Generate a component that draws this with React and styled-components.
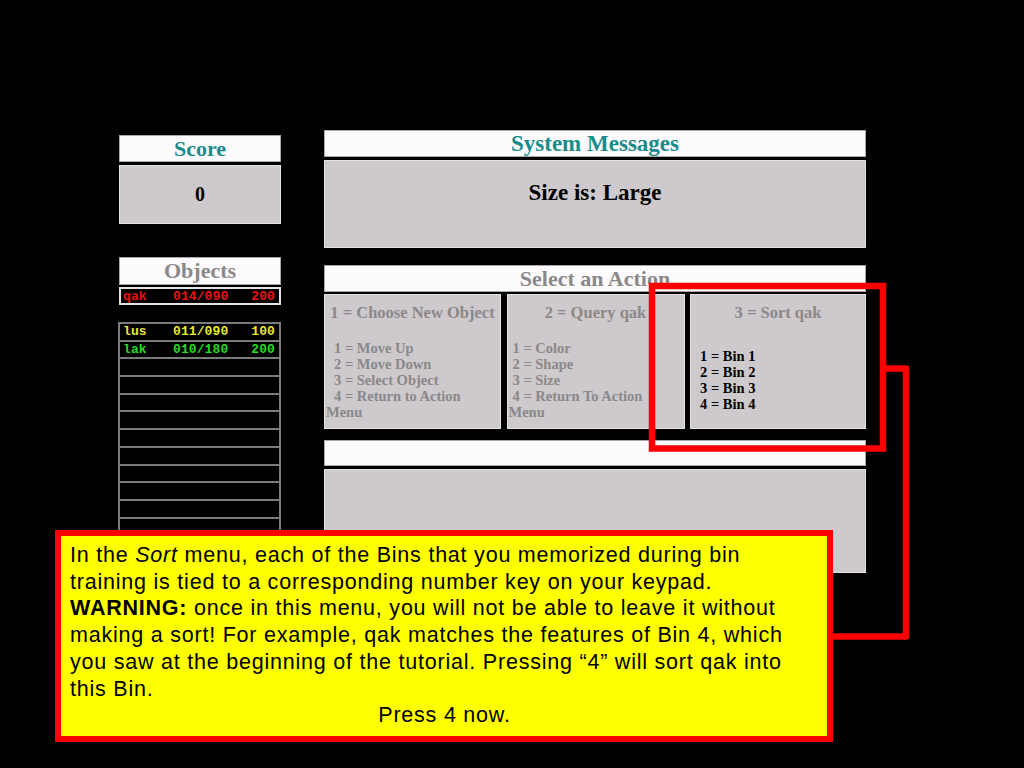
import React from "react";
import styled, { createGlobalStyle } from "styled-components";

const Global = createGlobalStyle`
  html, body { margin: 0; padding: 0; background: #000; }
  #root { width: 1024px; height: 768px; }
`;

const Screen = styled.div`
  position: relative;
  width: 1024px;
  height: 768px;
  background: #000;
  overflow: hidden;
  display: flex;
  align-items: flex-start;
  gap: 43px;
  padding-left: 119px;
  box-sizing: border-box;
  font-family: "Liberation Serif", "Times New Roman", serif;
`;

const LeftCol = styled.div`
  width: 162px;
  padding-top: 135px;
  display: flex;
  flex-direction: column;
`;

const RightCol = styled.div`
  width: 542px;
  padding-top: 130px;
  display: flex;
  flex-direction: column;
`;

const TitleBar = styled.div`
  height: ${(p) => p.$h || 27}px;
  margin-top: ${(p) => p.$mt || 0}px;
  background: #fdfbfd;
  border: 1px solid #a8a6a8;
  box-sizing: border-box;
  display: flex;
  align-items: center;
  justify-content: center;
  font-weight: bold;
  font-size: ${(p) => p.$fs || 22}px;
  color: ${(p) => p.$color || "#8a8888"};
`;

const GreyBox = styled.div`
  height: ${(p) => p.$h}px;
  margin-top: ${(p) => p.$mt || 3}px;
  background: #cdc9cd;
  border: 1px solid #e2e0e2;
  box-sizing: border-box;
  display: flex;
  justify-content: center;
  align-items: ${(p) => (p.$top ? "flex-start" : "center")};
  padding-top: ${(p) => p.$pt || 0}px;
  font-weight: bold;
  font-size: ${(p) => p.$fs || 20}px;
  color: #000;
`;

const ObjRow = styled.div`
  box-sizing: border-box;
  margin-top: ${(p) => p.$mt || 0}px;
  border: ${(p) => (p.$selected ? "2px solid #e4e4e4" : "none")};
  border-top: ${(p) => (p.$selected ? "2px solid #e4e4e4" : "2px solid #7c7c7c")};
  display: grid;
  grid-template-columns: 50px 1fr auto;
  align-items: center;
  padding: 0 4px 0 ${(p) => (p.$selected ? 2 : 3)}px;
  font-family: "Liberation Mono", "DejaVu Sans Mono", monospace;
  font-weight: bold;
  font-size: 13px;
  letter-spacing: 0.1px;
  color: ${(p) => p.$color || "#fff"};
  line-height: 1;
  height: ${(p) => (p.$selected ? 18 : 17.7)}px;
`;

const ObjList = styled.div`
  margin-top: 17px;
  width: 163px;
  margin-left: -1px;
  border-left: 2px solid #7c7c7c;
  border-right: 2px solid #7c7c7c;
  box-sizing: border-box;
`;

const Panels = styled.div`
  margin-top: 2px;
  height: 135px;
  display: grid;
  grid-template-columns: 177px 178px 176px;
  column-gap: 5.5px;
`;

const Panel = styled.div`
  background: #cdc9cd;
  border: 1px solid #e2e0e2;
  box-sizing: border-box;
  padding-top: 8px;
  display: flex;
  flex-direction: column;
`;

const PanelTitle = styled.div`
  text-align: center;
  font-weight: bold;
  font-size: 16.5px;
  line-height: 19px;
  color: #8a8888;
  white-space: nowrap;
`;

const ItemList = styled.div`
  margin-top: ${(p) => p.$mt}px;
  display: flex;
  flex-direction: column;
`;

const Item = styled.div`
  font-weight: bold;
  font-size: 14.5px;
  line-height: 16px;
  white-space: nowrap;
  color: ${(p) => (p.$dark ? "#000" : "#8a8888")};
  padding-left: ${(p) => p.$indent}px;
`;

const WhiteBar = styled.div`
  margin-top: 11px;
  height: 26px;
  background: #fdfbfd;
  border: 1px solid #a8a6a8;
  box-sizing: border-box;
`;

const Overlay = styled.svg`
  position: absolute;
  left: 0;
  top: 0;
  width: 1024px;
  height: 768px;
  pointer-events: none;
  z-index: 1;
`;

const Callout = styled.div`
  position: absolute;
  left: 55px;
  top: 530px;
  width: 778px;
  height: 212px;
  box-sizing: border-box;
  border: 6.5px solid #ff0000;
  background: #ffff00;
  z-index: 2;
  padding: 6px 8px 0 9px;
  font-family: "Liberation Sans", Arial, sans-serif;
  font-size: 21.5px;
  letter-spacing: 0.78px;
  line-height: 26.7px;
  color: #000;
  white-space: nowrap;
`;

const Line = styled.div`
  text-align: ${(p) => (p.$center ? "center" : "left")};
`;

const objects = [
  { name: "lus", val: "011/090", pts: "100", color: "#e8e830" },
  { name: "lak", val: "010/180", pts: "200", color: "#22dd22" },
];

const panelA = ["1 = Move Up", "2 = Move Down", "3 = Select Object", "4 = Return to Action"];
const panelB = ["1 = Color", "2 = Shape", "3 = Size", "4 = Return To Action"];
const bins = ["1 = Bin 1", "2 = Bin 2", "3 = Bin 3", "4 = Bin 4"];

export default function App() {
  const emptyRows = Array.from({ length: 12 });
  return (
    <Screen>
      <Global />
      <LeftCol>
        <TitleBar $color="#1a8c8a">Score</TitleBar>
        <GreyBox $h={59}>0</GreyBox>
        <TitleBar $mt={33} $h={28}>Objects</TitleBar>
        <ObjRow $selected $mt={2} $color="#ee1010">
          <span>qak</span>
          <span>014/090</span>
          <span>200</span>
        </ObjRow>
        <ObjList>
          {objects.map((o) => (
            <ObjRow key={o.name} $color={o.color}>
              <span>{o.name}</span>
              <span>{o.val}</span>
              <span>{o.pts}</span>
            </ObjRow>
          ))}
          {emptyRows.map((_, i) => (
            <ObjRow key={i} />
          ))}
        </ObjList>
      </LeftCol>
      <RightCol>
        <TitleBar $color="#1a8c8a" $fs={23}>System Messages</TitleBar>
        <GreyBox $h={88} $top $pt={19} $fs={23}>Size is: Large</GreyBox>
        <TitleBar $mt={17}>Select an Action</TitleBar>
        <Panels>
          <Panel>
            <PanelTitle>1 = Choose New Object</PanelTitle>
            <ItemList $mt={18}>
              {panelA.map((t) => (
                <Item key={t} $indent={9}>{t}</Item>
              ))}
              <Item $indent={1}>Menu</Item>
            </ItemList>
          </Panel>
          <Panel>
            <PanelTitle>2 = Query qak</PanelTitle>
            <ItemList $mt={18}>
              {panelB.map((t) => (
                <Item key={t} $indent={5}>{t}</Item>
              ))}
              <Item $indent={1}>Menu</Item>
            </ItemList>
          </Panel>
          <Panel>
            <PanelTitle>3 = Sort qak</PanelTitle>
            <ItemList $mt={26}>
              {bins.map((t) => (
                <Item key={t} $dark $indent={9}>{t}</Item>
              ))}
            </ItemList>
          </Panel>
        </Panels>
        <WhiteBar />
        <GreyBox $h={104} />
      </RightCol>

      <Overlay viewBox="0 0 1024 768">
        <rect x="652" y="286" width="231" height="162.5" fill="none" stroke="#ff0000" strokeWidth="6.5" />
        <path d="M883 368.5 H906 V636.5 H830" fill="none" stroke="#ff0000" strokeWidth="6.5" strokeLinejoin="round" />
      </Overlay>

      <Callout>
        <Line>In the <i>Sort</i> menu, each of the Bins that you memorized during bin</Line>
        <Line>training is tied to a corresponding number key on your keypad.</Line>
        <Line><b>WARNING:</b> once in this menu, you will not be able to leave it without</Line>
        <Line>making a sort! For example, qak matches the features of Bin 4, which</Line>
        <Line>you saw at the beginning of the tutorial. Pressing “4” will sort qak into</Line>
        <Line>this Bin.</Line>
        <Line $center>Press 4 now.</Line>
      </Callout>
    </Screen>
  );
}
